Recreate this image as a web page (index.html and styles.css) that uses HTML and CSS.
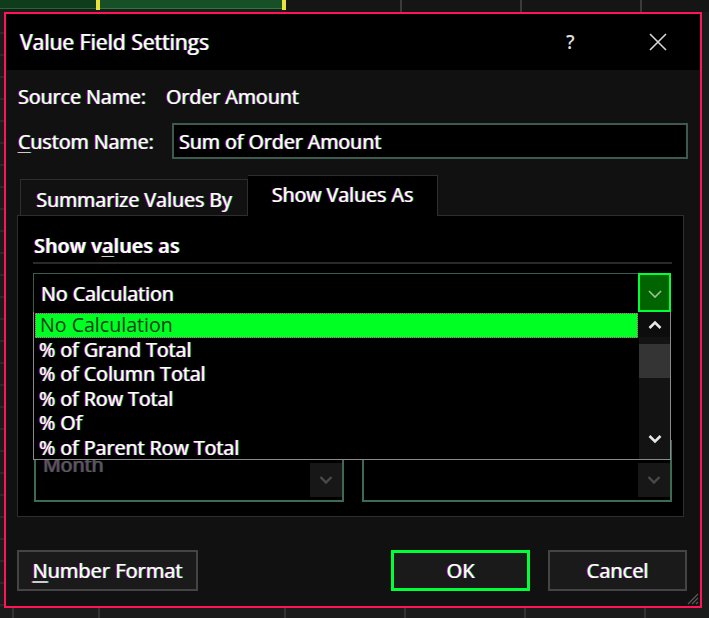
FILE: index.html
```html
<!DOCTYPE html>
<html>
<head>
<meta charset="utf-8">
<link rel="stylesheet" href="styles.css">
</head>
<body>
<div class="sheet">
  <div class="topbar">
    <span class="seg seg-a"></span><span class="tick"></span><span class="seg seg-b"></span><span class="tick"></span><span class="seg seg-c"></span>
  </div>
  <div class="stage">
    <div class="leftstrip"></div>
    <div class="dialog">
      <div class="titlebar">
        <span class="title">Value Field Settings</span>
        <span class="help">?</span>
        <svg class="close" width="20" height="20" viewBox="0 0 20 20"><path d="M2 2 L18 18 M18 2 L2 18" stroke="#d8d8d8" stroke-width="1.6" fill="none"/></svg>
      </div>
      <div class="body">
        <div class="row source">
          <span class="lbl">Source Name:</span><span class="val">Order Amount</span>
        </div>
        <div class="row custom">
          <span class="lbl2"><u>C</u>ustom Name:</span>
          <div class="input">Sum of Order Amount</div>
        </div>
        <div class="tabs">
          <div class="tab">Summarize Values By</div>
          <div class="tab active">Show Values As</div>
        </div>
        <div class="panel">
          <div class="section">Show v<u>a</u>lues as</div>
          <div class="sep"></div>
          <div class="combo-wrap">
            <div class="combo">
              <span class="combo-text">No Calculation</span>
              <div class="dd-btn">
                <svg width="16" height="10" viewBox="0 0 16 10"><path d="M2 2 L8 8 L14 2" stroke="#9fbf9f" stroke-width="1.6" fill="none"/></svg>
              </div>
            </div>
            <div class="list">
              <div class="items">
                <div class="item selected">No Calculation</div>
                <div class="item">% of Grand Total</div>
                <div class="item">% of Column Total</div>
                <div class="item">% of Row Total</div>
                <div class="item">% Of</div>
                <div class="item">% of Parent Row Total</div>
              </div>
              <div class="scrollbar">
                <div class="arrow up"><svg width="16" height="10" viewBox="0 0 16 10"><path d="M2.5 8 L8 2.5 L13.5 8" stroke="#e6e6e6" stroke-width="2.6" fill="none"/></svg></div>
                <div class="thumb"></div>
                <div class="track"></div>
                <div class="arrow down"><svg width="16" height="10" viewBox="0 0 16 10"><path d="M2.5 2 L8 7.5 L13.5 2" stroke="#e6e6e6" stroke-width="2.6" fill="none"/></svg></div>
              </div>
            </div>
          </div>
          <div class="base-row">
            <div class="base">
              <span class="base-text">Month</span>
              <div class="base-btn"><svg width="16" height="10" viewBox="0 0 16 10"><path d="M2.5 2 L8 7.5 L13.5 2" stroke="#4a4a4a" stroke-width="2.4" fill="none"/></svg></div>
            </div>
            <div class="base right">
              <span class="base-text"></span>
              <div class="base-btn"><svg width="16" height="10" viewBox="0 0 16 10"><path d="M2.5 2 L8 7.5 L13.5 2" stroke="#4a4a4a" stroke-width="2.4" fill="none"/></svg></div>
            </div>
          </div>
        </div>
        <div class="buttons">
          <div class="btn numfmt"><u>N</u>umber Format</div>
          <div class="spacer"></div>
          <div class="btn ok">OK</div>
          <div class="btn cancel">Cancel</div>
        </div>
        <svg class="grip" width="12" height="12" viewBox="0 0 12 12"><path d="M11 1 L1 11 M11 5 L5 11 M11 9 L9 11" stroke="#5a5a5a" stroke-width="1.2"/></svg>
      </div>
    </div>
  </div>
  <div class="bottomstrip"></div>
</div>
</body>
</html>
```
FILE: styles.css
```css
* { box-sizing: border-box; }
html, body { margin: 0; padding: 0; background: #1b1b1b; }
body {
  width: 709px; height: 618px; overflow: hidden;
  font-family: "Open Sans", "Noto Sans", sans-serif;
  font-size: 19.6px;
  color: #fff;
}
u { text-decoration: underline; text-decoration-color: #ccc; text-underline-offset: 3px; }

.sheet { width: 709px; height: 618px; display: flex; flex-direction: column; }

.topbar { height: 12px; display: flex; align-items: flex-start; }
.seg { height: 9px; display: block; }
.seg-a { width: 96px; background: #0f3d1c; border-bottom: 1px solid #1f6a30; }
.tick { width: 4px; height: 10px; background: #e8e23a; display: block; }
.seg-b { width: 182px; background: #174f26; border-bottom: 1px solid #2a7a3a; }
.seg-c { flex: 1; height: 12px;
  background: linear-gradient(90deg, transparent 0 114px, #3a3a3a 114px 116px, transparent 116px 234px, #3a3a3a 234px 236px, transparent 236px 354px, #3a3a3a 354px 356px, transparent 356px) #151515; }

.stage { display: flex; height: 596px; }
.leftstrip { width: 4px; background: repeating-linear-gradient(180deg, #1b1b1b 0 20px, #2a2a2a 20px 22px); }

.dialog {
  width: 698px; height: 596px;
  border: 2px solid #ff1458;
  background: #111;
  display: flex; flex-direction: column;
  text-shadow: -1px 0 rgba(255, 20, 140, 0.9), 1px 0 rgba(0, 255, 170, 0.8);
}
.bottomstrip { flex: 1;
  background: linear-gradient(90deg, transparent 0 12px, #333 12px 14px, transparent 14px 98px, #333 98px 100px, transparent 100px 284px, #333 284px 286px, transparent 286px 404px, #333 404px 406px, transparent 406px 524px, #333 524px 526px, transparent 526px 644px, #333 644px 646px, transparent 646px) #1b1b1b; }

.titlebar {
  height: 56px; background: #000;
  display: flex; align-items: center;
  padding-left: 14px;
}
.title { font-size: 21px; flex: 1; }
.help { font-size: 19px; color: #ddd; width: 14px; margin-right: 68px; text-shadow: none; font-weight: 600; }
.close { margin-right: 32px; }

.body { height: 536px; position: relative; display: flex; flex-direction: column; }

.row { display: flex; align-items: center; padding-left: 12px; }
.source { margin-top: 13px; height: 26px; }
.source .lbl { width: 148px; }
.custom { margin-top: 14px; height: 36px; }
.lbl2 { width: 154px; }
.input {
  width: 516px; height: 36px;
  border: 2px solid #3d5a4e; background: #000;
  display: flex; align-items: center; padding-left: 5px;
}

.tabs { margin-top: 16px; height: 40px; display: flex; align-items: flex-end; padding-left: 14px; position: relative; z-index: 2; }
.tab {
  height: 36px; width: 228px;
  border: 1px solid #2e2e2e; border-bottom: none;
  background: #111;
  display: flex; align-items: center; justify-content: center;
  padding-top: 4px;
}
.tab.active {
  height: 41px; width: 190px; margin-bottom: -1px;
  background: #000; border-color: #2e2e2e;
  border-left: none;
  padding-top: 0; padding-bottom: 4px;
}

.panel {
  margin-left: 11px; width: 667px; height: 302px;
  border: 1px solid #2e2e2e; background: #000;
  padding-left: 16px; padding-top: 19px;
}
.section { height: 22px; line-height: 22px; font-weight: 600; font-size: 19.6px; letter-spacing: 0.2px; }
.sep { margin-top: 5px; margin-left: -1px; width: 639px; height: 2px; background: #2a2a2a; }
.combo-wrap { position: relative; margin-top: 9px; margin-left: -1px; width: 638px; z-index: 3; }
.combo {
  height: 39px; width: 638px;
  border: 1px solid #3d5a4e; border-bottom: none; background: #000;
  display: flex; align-items: center; padding-left: 7px;
}
.combo-text { flex: 1; }
.dd-btn {
  width: 33px; height: 39px; margin-right: -1px; margin-top: -1px;
  border: 2px solid #00ff38; background: #006400;
  display: flex; align-items: center; justify-content: center; padding-top: 3px;
}
.list {
  position: absolute; left: 0; top: 39px;
  width: 638px; height: 148px;
  border: 1px solid #8a8a8a; border-top: none; background: #000;
  display: flex;
}
.items { flex: 1; padding-left: 1px; padding-top: 1px; }
.item { height: 24.4px; line-height: 24.4px; padding-left: 4px; white-space: nowrap; }
.item.selected {
  height: 25px; line-height: 22px;
  background: #00ff22; color: #0b3d14; text-shadow: none;
  border: 1px dotted #d0208a;
  margin-right: 1px;
}
.scrollbar { width: 31px; background: #131313; display: flex; flex-direction: column; }
.arrow { height: 25px; display: flex; align-items: center; justify-content: center; }
.arrow.up { background: #0d0d0d; }
.thumb { height: 34px; margin: 7px 0 0; background: #343434; }
.track { flex: 1; }
.arrow.down { height: 32px; padding-bottom: 8px; }

.base-row { display: flex; margin-top: 128px; gap: 18px; }
.base {
  width: 310px; height: 62px;
  border: 2px solid #3d6a55; border-top: 1px solid #3d6a55;
  display: flex; align-items: flex-start; padding-left: 7px; position: relative;
}
.base.right { width: 310px; }
.base-text { flex: 1; color: #5a5a5a; margin-top: 12px; line-height: 24px;
  text-shadow: -1px 0 rgba(150, 30, 110, 0.6), 1px 0 rgba(40, 130, 110, 0.6); }
.base-btn {
  width: 32px; height: 34px; margin-top: 22px; margin-right: 0;
  background: #171717; display: flex; align-items: center; justify-content: center;
}

.buttons { display: flex; margin-top: 33px; padding-left: 11px; padding-right: 13px; height: 41px; }
.btn {
  height: 41px; background: #1a1a1a; border: 2px solid #444;
  display: flex; align-items: center; justify-content: center;
  font-size: 20px;
}
.numfmt { width: 181px; }
.spacer { flex: 1; }
.ok { width: 139px; border: 3px solid #00ff38; margin-right: 18px; }
.cancel { width: 139px; }

.grip { position: absolute; right: 1px; bottom: 1px; }
```
